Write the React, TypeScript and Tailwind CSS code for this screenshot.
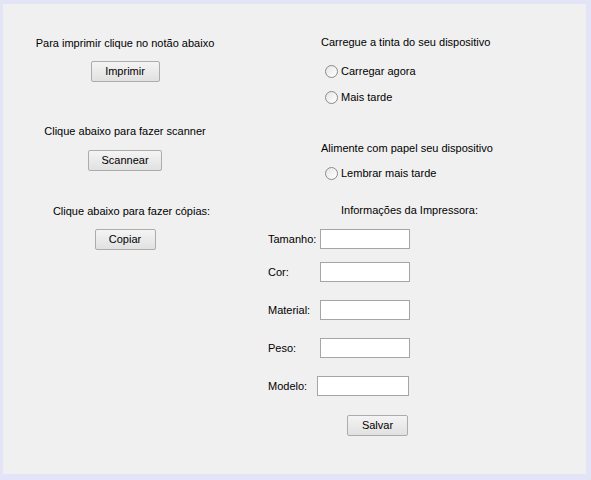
import React from 'react';

const font = { fontFamily: '"Liberation Sans", Arial, sans-serif' };

const Button = ({ label, width }: { label: string; width: string }) => (
  <button
    className={`block ${width} h-[21px] rounded-[2px] border border-[#acacac] bg-linear-to-b from-[#f4f4f4] to-[#e1e1e1] text-[11px] leading-[19px] text-black`}
  >
    {label}
  </button>
);

const Radio = ({ label, className }: { label: string; className: string }) => (
  <label className={`flex h-[20px] items-center ${className}`}>
    <span className="mr-[3px] h-[13px] w-[13px] rounded-full border border-[#8a8a8a] bg-linear-to-br from-[#e6e6e6] to-white" />
    <span className="text-[11px] leading-[14px] text-black">{label}</span>
  </label>
);

const Field = ({ label, labelW, inputW, className }: { label: string; labelW: string; inputW: string; className: string }) => (
  <div className={`flex h-[20px] items-center ${className}`}>
    <span className={`${labelW} text-[11px] leading-[14px] text-black`}>{label}</span>
    <input className={`${inputW} h-[20px] border border-[#a5a5a5] bg-white outline-none`} />
  </div>
);

export default function App() {
  return (
    <div className="h-[480px] w-[591px] bg-[#e4e4f8] pb-[6px] pl-[3px] pr-[5px] pt-[4px]" style={font}>
      <div className="flex h-full w-full bg-[#f0f0f0]">
        {/* left column */}
        <div className="flex w-[244px] flex-col items-center">
          <p className="mt-[32px] h-[14px] text-[11px] leading-[14px] text-black">Para imprimir clique no notão abaixo</p>
          <div className="mt-[11px]">
            <Button label="Imprimir" width="w-[69px]" />
          </div>
          <p className="mt-[42px] h-[14px] text-[11px] leading-[14px] text-black">Clique abaixo para fazer scanner</p>
          <div className="mt-[12px]">
            <Button label="Scannear" width="w-[74px]" />
          </div>
          <p className="ml-[13px] mt-[33px] h-[14px] text-[11px] leading-[14px] text-black">Clique abaixo para fazer cópias:</p>
          <div className="mt-[11px]">
            <Button label="Copiar" width="w-[61px]" />
          </div>
        </div>

        {/* right column */}
        <div className="ml-[21px] flex flex-col">
          <p className="ml-[53px] mt-[31px] h-[14px] text-[11px] leading-[14px] text-black">Carregue a tinta do seu dispositivo</p>
          <Radio label="Carregar agora" className="ml-[57px] mt-[12px]" />
          <Radio label="Mais tarde" className="ml-[57px] mt-[6px]" />
          <p className="ml-[53px] mt-[34px] h-[14px] text-[11px] leading-[14px] text-black">Alimente com papel seu dispositivo</p>
          <Radio label="Lembrar mais tarde" className="ml-[57px] mt-[8px]" />
          <p className="ml-[73px] mt-[20px] h-[14px] text-[11px] leading-[14px] text-black">Informações da Impressora:</p>
          <Field label="Tamanho:" labelW="w-[52px]" inputW="w-[90px]" className="mt-[12px]" />
          <Field label="Cor:" labelW="w-[52px]" inputW="w-[90px]" className="mt-[13px]" />
          <Field label="Material:" labelW="w-[52px]" inputW="w-[90px]" className="mt-[18px]" />
          <Field label="Peso:" labelW="w-[52px]" inputW="w-[90px]" className="mt-[18px]" />
          <Field label="Modelo:" labelW="w-[49px]" inputW="w-[92px]" className="mt-[18px]" />
          <div className="ml-[79px] mt-[19px]">
            <Button label="Salvar" width="w-[61px]" />
          </div>
        </div>
      </div>
    </div>
  );
}
